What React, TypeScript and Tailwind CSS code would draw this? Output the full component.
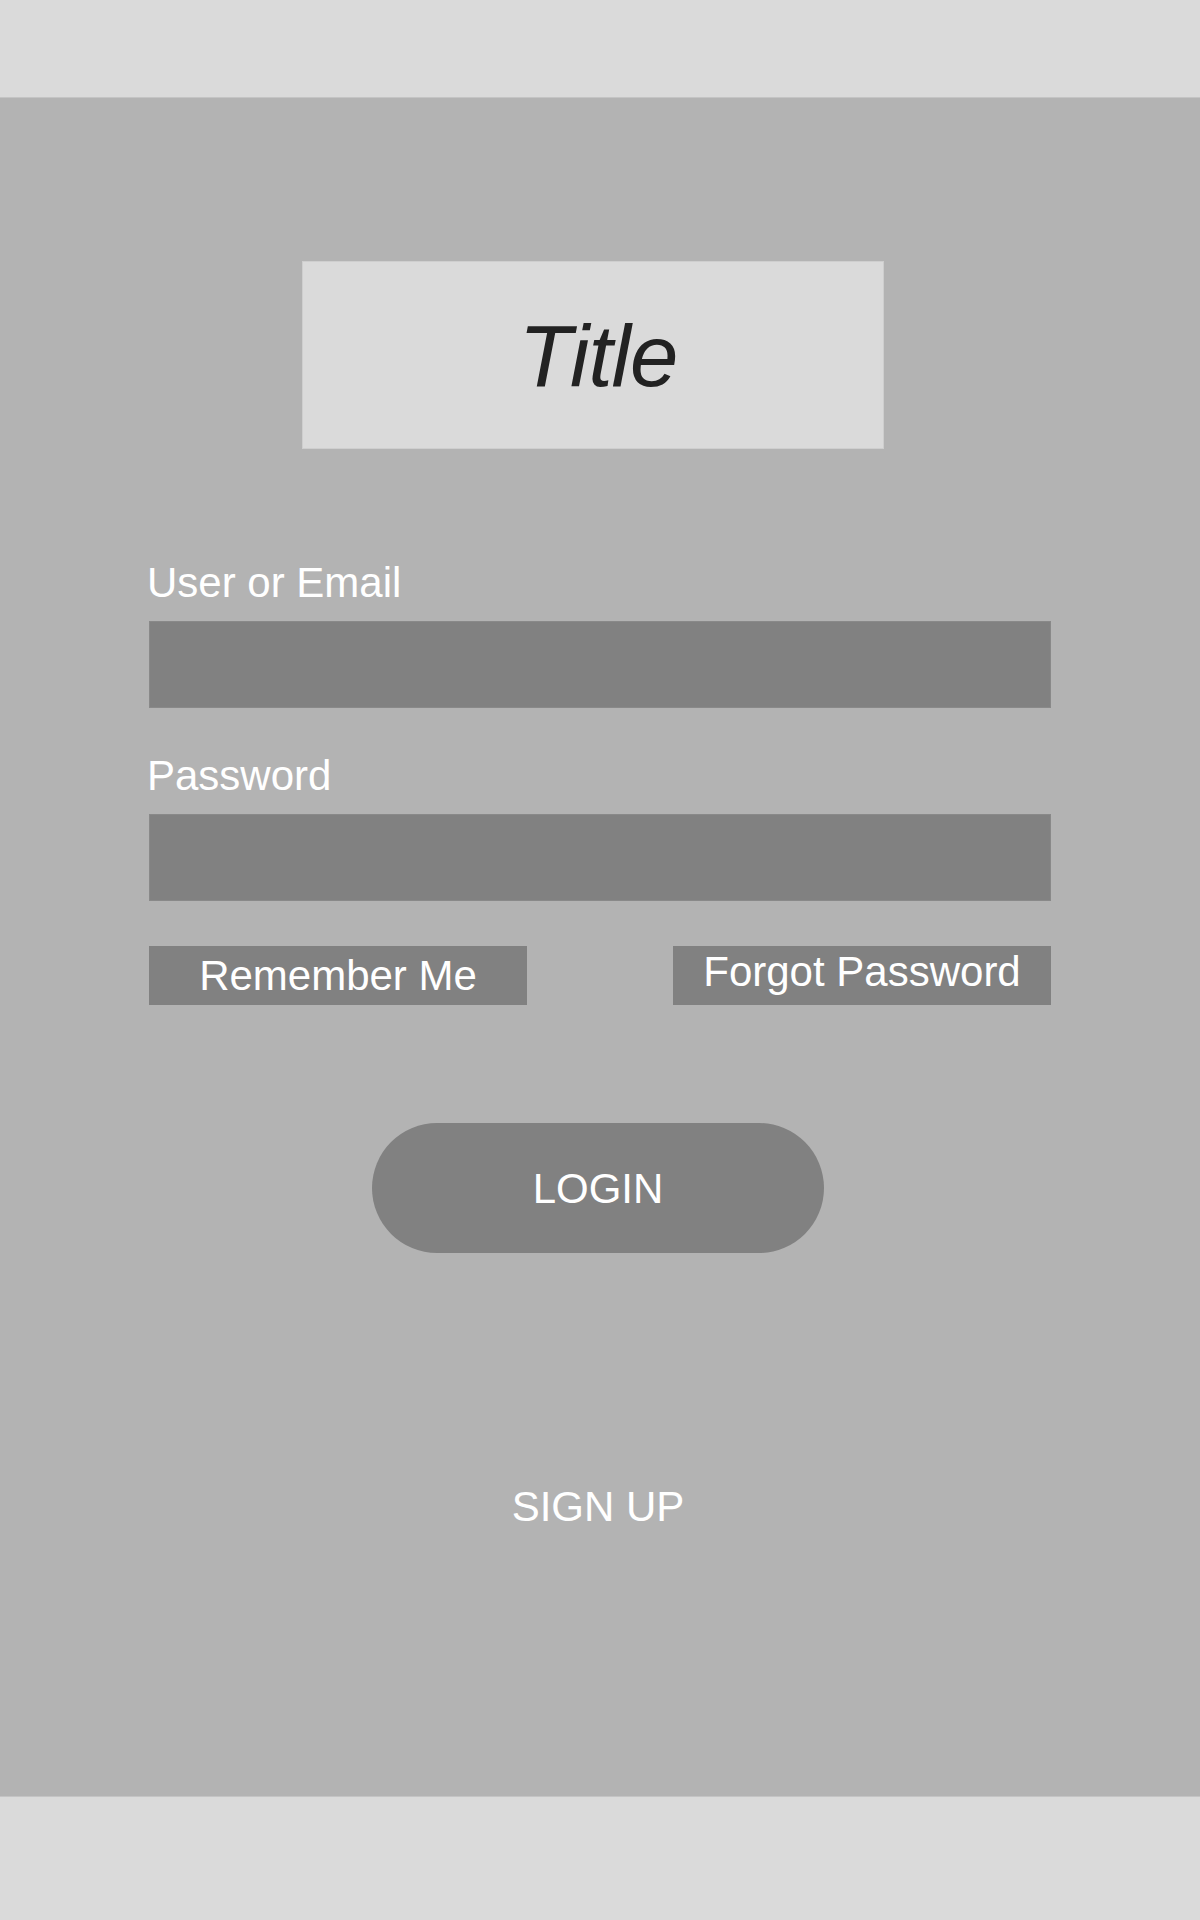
import React from "react";

const font = { fontFamily: '"Liberation Sans", Arial, sans-serif' };

interface FieldProps {
  label: string;
  type?: string;
}

const Field: React.FC<FieldProps> = ({ label, type = "text" }) => (
  <div className="flex flex-col">
    <label className="ml-[147px] text-[42px] leading-[48px] text-white">{label}</label>
    <input
      type={type}
      aria-label={label}
      className="ml-[149px] mt-[14px] h-[87px] w-[902px] border border-[#898989] bg-[#818181] outline-none"
    />
  </div>
);

export default function App() {
  return (
    <div className="flex h-[1920px] w-[1200px] flex-col" style={font}>
      <div className="h-[97px] w-full bg-[#dadada]" />

      <main className="flex h-[1700px] w-full flex-col border-t border-b border-[#c4c4c4] bg-[#b3b3b3] pt-[163px]">
        <div className="ml-[302px] flex h-[188px] w-[582px] items-center justify-center border border-[#cecece] bg-[#dadada] pl-[10px]">
          <h1 className="text-[87px] italic leading-none tracking-[-1px] text-[#222222]">Title</h1>
        </div>

        <div className="mt-[110px]">
          <Field label="User or Email" />
        </div>
        <div className="mt-[44px]">
          <Field label="Password" type="password" />
        </div>

        <div className="ml-[149px] mt-[45px] flex w-[902px] justify-between">
          <button className="flex h-[59px] w-[378px] items-center justify-center bg-[#818181] text-[42px] leading-[48px] text-white">
            Remember Me
          </button>
          <button className="flex h-[59px] w-[378px] items-center justify-center bg-[#818181] pb-[7px] text-[42px] leading-[48px] text-white">
            Forgot Password
          </button>
        </div>

        <div className="mt-[118px] flex justify-center pr-[4px]">
          <button className="flex h-[130px] w-[452px] items-center justify-center rounded-full bg-[#818181] pt-[1px] text-[42px] leading-[48px] text-white">
            LOGIN
          </button>
        </div>

        <div className="mt-[230px] flex justify-center pr-[4px]">
          <button className="text-[42px] leading-[48px] text-white">SIGN UP</button>
        </div>
      </main>

      <div className="w-full flex-1 bg-[#dadada]" />
    </div>
  );
}
